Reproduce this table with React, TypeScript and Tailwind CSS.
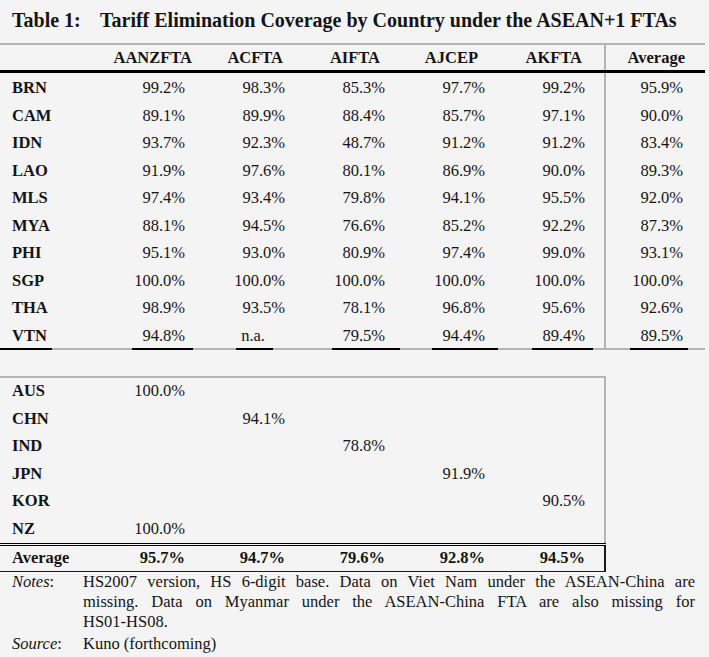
import React from 'react';

// Table 1 — tariff elimination coverage by country under the ASEAN+1 FTAs.
// Scanned-report look: serif text, grey rules with black segments under the cells.

const COLS = 'grid grid-cols-[100px_90px_100px_100px_100px_114px_101px]';
const COLS_LOWER = 'grid grid-cols-[100px_90px_100px_100px_100px_114px]';

const headers = ['AANZFTA', 'ACFTA', 'AIFTA', 'AJCEP', 'AKFTA'];

const headerPad = ['pr-0 -mr-[2px]', 'pr-[7px]', 'pr-[10px]', 'pr-[12px]', 'pr-[22px]'];
const cellPad = ['pr-[5px]', 'pr-[5px]', 'pr-[5px]', 'pr-[5px]', 'pr-[19px]'];

type Row = { code: string; values: string[]; avg: string };

const rows: Row[] = [
  { code: 'BRN', values: ['99.2%', '98.3%', '85.3%', '97.7%', '99.2%'], avg: '95.9%' },
  { code: 'CAM', values: ['89.1%', '89.9%', '88.4%', '85.7%', '97.1%'], avg: '90.0%' },
  { code: 'IDN', values: ['93.7%', '92.3%', '48.7%', '91.2%', '91.2%'], avg: '83.4%' },
  { code: 'LAO', values: ['91.9%', '97.6%', '80.1%', '86.9%', '90.0%'], avg: '89.3%' },
  { code: 'MLS', values: ['97.4%', '93.4%', '79.8%', '94.1%', '95.5%'], avg: '92.0%' },
  { code: 'MYA', values: ['88.1%', '94.5%', '76.6%', '85.2%', '92.2%'], avg: '87.3%' },
  { code: 'PHI', values: ['95.1%', '93.0%', '80.9%', '97.4%', '99.0%'], avg: '93.1%' },
  { code: 'SGP', values: ['100.0%', '100.0%', '100.0%', '100.0%', '100.0%'], avg: '100.0%' },
  { code: 'THA', values: ['98.9%', '93.5%', '78.1%', '96.8%', '95.6%'], avg: '92.6%' },
];

const vtn: Row = { code: 'VTN', values: ['94.8%', 'n.a.', '79.5%', '94.4%', '89.4%'], avg: '89.5%' };
// black underline segments on the closing rule, one per cell
const vtnSeg = [
  '-mr-[3px] pl-[10px] pr-[8px]',
  'mr-[17px] pl-[5px] pr-[8px]',
  '-mr-[10px] pl-[10px] pr-[15px]',
  '-mr-[8px] pl-[10px] pr-[13px]',
  'mr-[11px] pl-[10px] pr-[8px]',
];

const partners = [
  { code: 'AUS', col: 0, value: '100.0%' },
  { code: 'CHN', col: 1, value: '94.1%' },
  { code: 'IND', col: 2, value: '78.8%' },
  { code: 'JPN', col: 3, value: '91.9%' },
  { code: 'KOR', col: 4, value: '90.5%' },
  { code: 'NZ', col: 0, value: '100.0%' },
];

const averages = ['95.7%', '94.7%', '79.6%', '92.8%', '94.5%'];

const GREY = 'border-[#b4b4b4]';

export default function App() {
  return (
    <div className="w-[709px] h-[657px] overflow-hidden bg-[#f4f4f4] text-[#141414] font-['Liberation_Serif',serif] text-[16.5px] leading-none">
      <div className="flex h-[43px] items-center pb-[3px] pl-3 text-[20px] font-bold">
        <span className="w-[88px]">Table 1:</span>
        <span>Tariff Elimination Coverage by Country under the ASEAN+1 FTAs</span>
      </div>

      <div className={`w-[705px] border-t-2 ${GREY}`}>
        <div className={`${COLS} h-[28px] border-b-[3px] border-black font-bold`}>
          <div />
          {headers.map((h, i) => (
            <div key={h} className={`flex items-center justify-end pt-[2px] ${headerPad[i]}`}>
              {h}
            </div>
          ))}
          <div className={`flex items-center justify-end border-l-2 pt-[2px] pr-[20px] ${GREY}`}>Average</div>
        </div>

        {rows.map((r) => (
          <div key={r.code} className={`${COLS} h-[27.5px]`}>
            <div className="flex items-center pl-3 pt-[3px] font-bold">{r.code}</div>
            {r.values.map((v, i) => (
              <div key={i} className={`flex items-center justify-end pt-[3px] ${cellPad[i]}`}>
                {v}
              </div>
            ))}
            <div className={`flex items-center justify-end border-l-2 pt-[3px] pr-[22px] ${GREY}`}>{r.avg}</div>
          </div>
        ))}

        <div className={`${COLS} h-[29.5px] border-b-2 ${GREY}`}>
          <div className="-mb-[2px] flex">
            <span className="flex items-center border-b-2 border-black pl-3 pr-[5px] pt-[3px] font-bold">{vtn.code}</span>
          </div>
          {vtn.values.map((v, i) => (
            <div key={i} className="-mb-[2px] flex justify-end">
              <span className={`flex items-center border-b-2 border-black pt-[3px] ${vtnSeg[i]}`}>{v}</span>
            </div>
          ))}
          <div className={`-mb-[2px] flex justify-end border-l-2 ${GREY}`}>
            <span className="mr-[17px] flex items-center border-b-2 border-black pl-[10px] pr-[5px] pt-[3px]">{vtn.avg}</span>
          </div>
        </div>
      </div>

      <div className="mt-[26px] w-[606px]">
        <div className="border-t-2 border-r-2 border-[#b4b4b4]">
          {partners.map((p) => (
            <div key={p.code} className={`${COLS_LOWER} h-[27.5px]`}>
              <div className="flex items-center pl-3 pt-[3px] font-bold">{p.code}</div>
              {headers.map((_, i) => (
                <div key={i} className={`flex items-center justify-end pt-[3px] ${cellPad[i]}`}>
                  {i === p.col ? p.value : ''}
                </div>
              ))}
              <div />
            </div>
          ))}
        </div>
        <div className="border-t-[3px] border-double border-black">
          <div className={`${COLS_LOWER} h-[26px] border-b border-r-2 border-[#1a1a1a] font-bold`}>
            <div className="flex items-center pl-3 pt-[3px]">Average</div>
            {averages.map((v, i) => (
              <div key={i} className={`flex items-center justify-end pt-[3px] ${cellPad[i]}`}>
                {v}
              </div>
            ))}
            <div />
          </div>
        </div>
      </div>

      <div className="grid grid-cols-[83px_612px] leading-[20px]">
        <div className="pl-3">
          <i>Notes</i>:
        </div>
        <div>
          <div className="text-justify [text-align-last:justify]">
            HS2007 version, HS 6-digit base. Data on Viet Nam under the ASEAN-China are
          </div>
          <div className="text-justify [text-align-last:justify]">
            missing. Data on Myanmar under the ASEAN-China FTA are also missing for
          </div>
          <div>HS01-HS08.</div>
        </div>
        <div className="pl-3 pt-[2px]">
          <i>Source</i>:
        </div>
        <div className="pt-[2px]">Kuno (forthcoming)</div>
      </div>
    </div>
  );
}
